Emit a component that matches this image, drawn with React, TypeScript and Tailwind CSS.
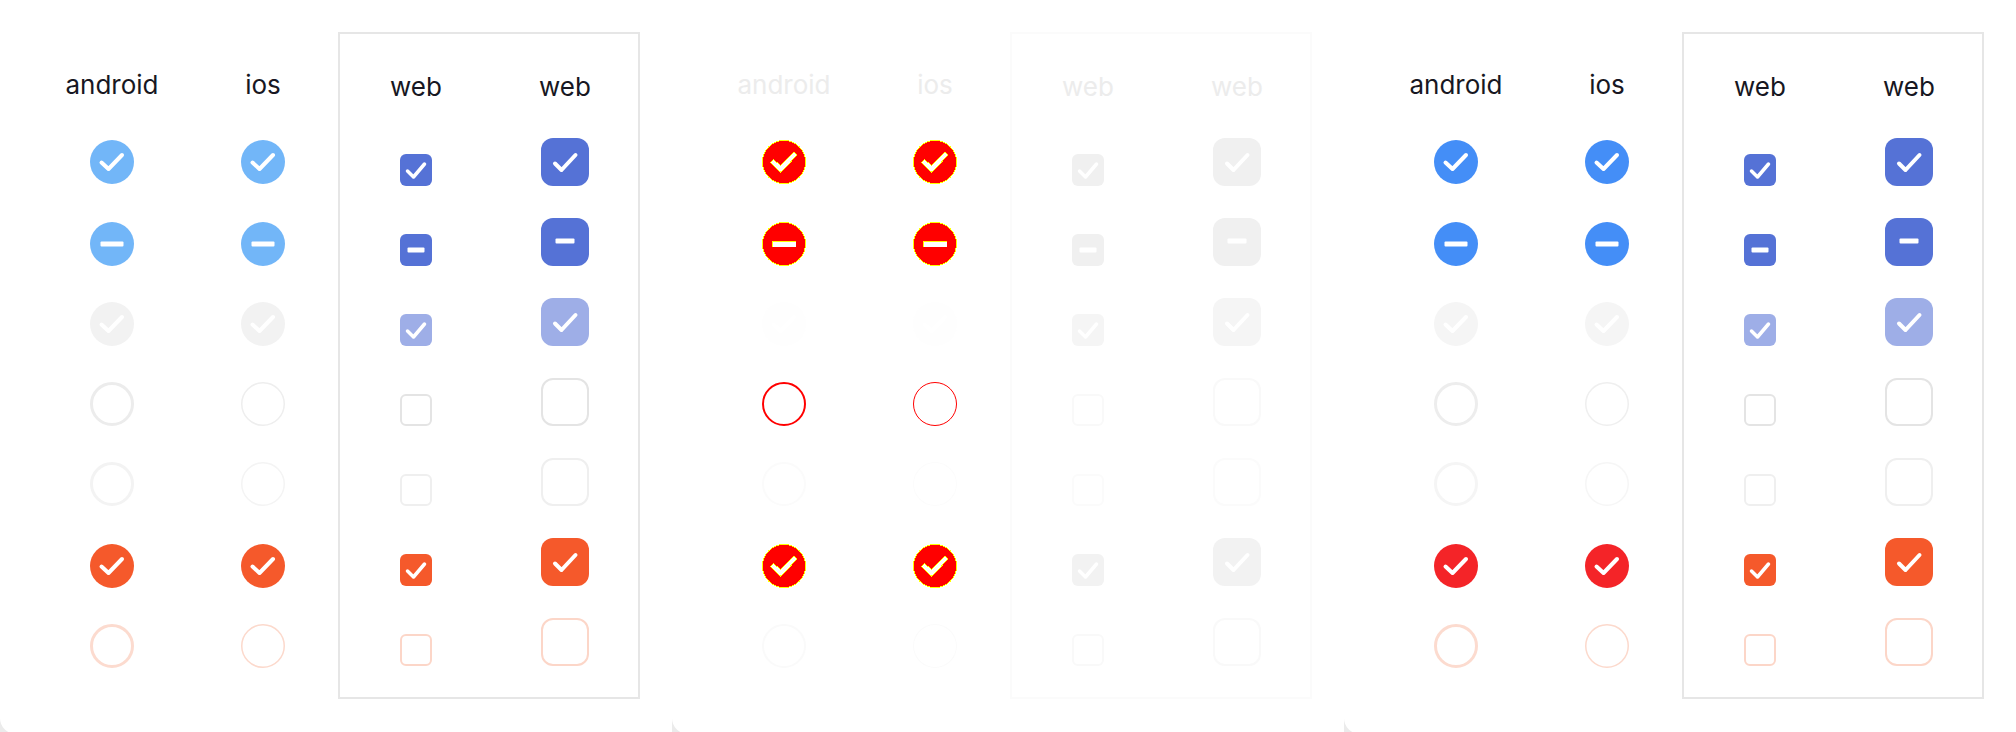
import React from "react";

type Kind = "circle" | "small" | "big";
type State = "checked" | "minus" | "empty";

type Cell = {
  state: State;
  fill?: string;
  stroke?: string;
  sw?: number;
  fringe?: string;
};

const SIZE: Record<Kind, number> = { circle: 44, small: 32, big: 48 };
const RADIUS: Record<Kind, number> = { circle: 22, small: 6, big: 12 };

// check + minus geometry per shape, in px of the glyph box
const CHECK: Record<Kind, string> = {
  circle: "M11.5 22.5 L18.5 29 L32 15",
  small: "M7.5 17 L13.5 23 L24.5 10",
  big: "M14 25.5 L20.5 32 L34.5 17",
};
const BAR: Record<Kind, [number, number, number]> = {
  circle: [11, 33, 22],
  small: [8, 24, 16],
  big: [15, 33, 23],
};

// row heights: circles sit a little irregular in the source, web boxes are on an 80px grid
const ROWS: Record<Kind, string[]> = {
  circle: ["h-[80px]", "h-[82px]", "h-[80px]", "h-[80px]", "h-[80px]", "h-[82px]", "h-[80px]"],
  small: ["h-[80px]", "h-[80px]", "h-[80px]", "h-[80px]", "h-[80px]", "h-[80px]", "h-[80px]"],
  big: ["h-[80px]", "h-[80px]", "h-[80px]", "h-[80px]", "h-[80px]", "h-[80px]", "h-[80px]"],
};

function Glyph({ kind, cell }: { kind: Kind; cell: Cell }) {
  const s = SIZE[kind];
  const r = RADIUS[kind];
  const sw = cell.sw ?? 2;
  const crisp = cell.fringe ? "crispEdges" : undefined;
  const shape =
    cell.state === "empty" ? (
      kind === "circle" ? (
        <circle cx={s / 2} cy={s / 2} r={s / 2 - sw / 2} fill="none" stroke={cell.stroke} strokeWidth={sw} />
      ) : (
        <rect x={sw / 2} y={sw / 2} width={s - sw} height={s - sw} rx={r - sw / 2} fill="none" stroke={cell.stroke} strokeWidth={sw} />
      )
    ) : kind === "circle" ? (
      <circle cx={s / 2} cy={s / 2} r={s / 2 - (cell.fringe ? 0.5 : 0)} fill={cell.fill} stroke={cell.fringe} strokeWidth={cell.fringe ? 1 : 0} shapeRendering={crisp} />
    ) : (
      <rect x={0} y={0} width={s} height={s} rx={r} fill={cell.fill} />
    );

  const [x1, x2, y] = BAR[kind];
  const mark =
    cell.state === "checked" ? (
      <>
        {cell.fringe && <path d={CHECK[kind]} fill="none" stroke={cell.fringe} strokeWidth={5.5} strokeLinecap="square" shapeRendering={crisp} />}
        <path d={CHECK[kind]} fill="none" stroke="#ffffff" strokeWidth={kind === "small" ? 3.5 : 4} strokeLinecap="round" strokeLinejoin="round" shapeRendering={crisp} />
      </>
    ) : cell.state === "minus" ? (
      <>
        {cell.fringe && <rect x={x1 - 1} y={y - 3} width={x2 - x1 + 2} height={6} fill={cell.fringe} shapeRendering={crisp} />}
        <rect x={x1 - 0.5} y={y - 2.5} width={x2 - x1 + 1} height={5} rx={cell.fringe ? 0 : 1} fill="#ffffff" shapeRendering={crisp} />
      </>
    ) : null;

  return (
    <svg width={s} height={s} viewBox={`0 0 ${s} ${s}`} className="block">
      {shape}
      {mark}
    </svg>
  );
}

type Column = { label: string; kind: Kind; cells: Cell[] };

type Panel = {
  text: string;
  frame: string;
  cols: Column[];
};

const c = (fill: string): Cell => ({ state: "checked", fill });
const m = (fill: string): Cell => ({ state: "minus", fill });
const o = (stroke: string, sw = 2): Cell => ({ state: "empty", stroke, sw });
const red = (state: State): Cell => ({ state, fill: "#ff0000", fringe: "#ffff00" });

function webCols(blue: string, light: string, orange: string, g1: string, g2: string, o7: string): Column[] {
  const make = (kind: Kind): Column => ({
    label: "web",
    kind,
    cells: [c(blue), m(blue), c(light), o(g1), o(g2), c(orange), o(o7)],
  });
  return [make("small"), make("big")];
}

const panels: Panel[] = [
  {
    text: "text-[#171722]",
    frame: "border-[#e6e6e6]",
    cols: [
      { label: "android", kind: "circle", cells: [c("#72b6f8"), m("#72b6f8"), c("#f2f2f2"), o("#ececec", 3), o("#f3f3f3", 3), c("#f5592b"), o("#fcdbcf", 3)] },
      { label: "ios", kind: "circle", cells: [c("#72b6f8"), m("#72b6f8"), c("#f2f2f2"), o("#eeeeee", 1.5), o("#f4f4f4", 1.5), c("#f5592b"), o("#fcd9cc", 1.5)] },
      ...webCols("#5572d6", "#9eaee7", "#f5592b", "#e4e4e4", "#efefef", "#fcd6c8"),
    ],
  },
  {
    text: "text-[#ececec]",
    frame: "border-[#fbfbfb]",
    cols: [
      { label: "android", kind: "circle", cells: [red("checked"), red("minus"), c("#fefefe"), o("#ff0000", 2), o("#fbfbfb", 2), red("checked"), o("#fafafa", 2)] },
      { label: "ios", kind: "circle", cells: [red("checked"), red("minus"), c("#fefefe"), o("#ff0000", 1), o("#fcfcfc", 1), red("checked"), o("#fbfbfb", 1)] },
      ...webCols("#f0f0f0", "#f5f5f5", "#f2f2f2", "#f9f9f9", "#fbfbfb", "#f9f9f9"),
    ],
  },
  {
    text: "text-[#171722]",
    frame: "border-[#e6e6e6]",
    cols: [
      { label: "android", kind: "circle", cells: [c("#448ef7"), m("#448ef7"), c("#f5f5f5"), o("#ededed", 3), o("#f5f5f5", 3), c("#f42428"), o("#fcdbcf", 3)] },
      { label: "ios", kind: "circle", cells: [c("#448ef7"), m("#448ef7"), c("#f5f5f5"), o("#efefef", 1.5), o("#f6f6f6", 1.5), c("#f42428"), o("#fcd9cc", 1.5)] },
      ...webCols("#5572d6", "#9eaee7", "#f5592b", "#e4e4e4", "#efefef", "#fcd6c8"),
    ],
  },
];

function ColumnView({ col, text, width }: { col: Column; text: string; width: string }) {
  return (
    <div className={`flex flex-col items-center ${width}`}>
      <div className={`h-[72px] pt-[37px] text-[26px] leading-[32px] ${text}`}>{col.label}</div>
      {col.cells.map((cell, i) => (
        <div key={i} className={`${ROWS[col.kind][i]} flex items-end justify-center`}>
          <Glyph kind={col.kind} cell={cell} />
        </div>
      ))}
    </div>
  );
}

function PanelView({ panel }: { panel: Panel }) {
  const [android, ios, small, big] = panel.cols;
  return (
    <div className="relative w-[672px] h-[734px] shrink-0 bg-white rounded-bl-[16px] pl-[36px] pt-[32px] flex">
      <ColumnView col={android} text={panel.text} width="w-[152px]" />
      <ColumnView col={ios} text={panel.text} width="w-[150px]" />
      <div className={`w-[302px] h-[667px] border-2 ${panel.frame} flex`}>
        <ColumnView col={small} text={panel.text} width="w-[152px]" />
        <ColumnView col={big} text={panel.text} width="w-[146px]" />
      </div>
    </div>
  );
}

export default function App() {
  return (
    <div className="w-[2016px] h-[732px] overflow-hidden bg-[#ebebeb] flex" style={{ fontFamily: "Inter, 'Noto Sans', sans-serif" }}>
      {panels.map((p, i) => (
        <PanelView key={i} panel={p} />
      ))}
    </div>
  );
}
